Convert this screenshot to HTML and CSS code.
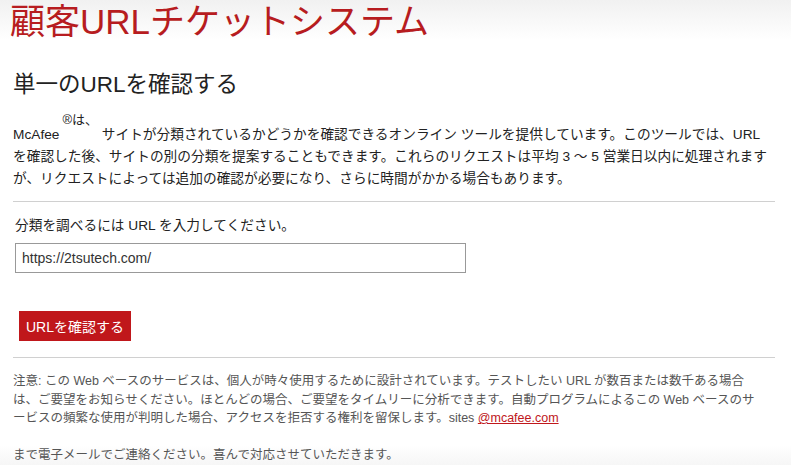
FILE: index.html
```html
<!DOCTYPE html>
<html lang="ja">
<head>
  <meta charset="UTF-8" />
  <meta name="viewport" content="width=device-width, initial-scale=1.0" />
  <title>顧客URLチケットシステム</title>
  <link rel="stylesheet" href="styles.css">
</head>
<body>
  <div class="page">
    <h1 class="site-title">顧客URLチケットシステム</h1>
    <h2 class="section-title">単一のURLを確認する</h2>
    <p class="intro">McAfee<sup class="reg">®は、</sup> サイトが分類されているかどうかを確認できるオンライン ツールを提供しています。このツールでは、URL を確認した後、サイトの別の分類を提案することもできます。これらのリクエストは平均 3 〜 5 営業日以内に処理されますが、リクエストによっては追加の確認が必要になり、さらに時間がかかる場合もあります。</p>
    <hr class="divider" />
    <form class="check-form" onsubmit="return false;">
      <label class="check-label" for="url">分類を調べるには URL を入力してください。</label>
      <input class="check-input" type="text" id="url" name="url" value="https://2tsutech.com/" />
      <button class="check-btn" type="submit">URLを確認する</button>
    </form>
    <hr class="divider" />
    <div class="notes">
      <p>注意: この Web ベースのサービスは、個人が時々使用するために設計されています。テストしたい URL が数百または数千ある場合は、ご要望をお知らせください。ほとんどの場合、ご要望をタイムリーに分析できます。自動プログラムによるこの Web ベースのサービスの頻繁な使用が判明した場合、アクセスを拒否する権利を留保します。sites <a href="#">@mcafee.com</a></p>
      <p class="notes-last">まで電子メールでご連絡ください。喜んで対応させていただきます。</p>
    </div>
  </div>
</body>
</html>
```

FILE: styles.css
```css
/* Base */
* { box-sizing: border-box; }
html, body { margin: 0; padding: 0; }
body {
  font-family: "Liberation Sans", "Noto Sans CJK JP", sans-serif;
  color: #222;
  background: linear-gradient(to bottom, #f1f1f1 0, #fff 40px, #fff 445px, #f6f6f6 465px);
  min-height: 465px;
}
.page { padding: 0 16px 0 13px; }

/* Headings */
.site-title {
  margin: 0 0 0 -3px;
  font-size: 35px; line-height: 44px; font-weight: normal;
  color: #b71c20;
}
.section-title {
  margin: 26px 0 0;
  font-size: 22.5px; line-height: 30px; font-weight: normal;
  color: #222;
}

/* Intro paragraph */
.intro {
  margin: 20px 0 0;
  font-size: 13.7px; line-height: 22px;
}
.reg {
  font-size: 13px; line-height: 0;
  vertical-align: 15px;
  margin-left: 3px;
}

.divider {
  border: 0; border-top: 1px solid #d0d0d0;
  margin: 11px 0 0;
}

/* Form */
.check-form { display: flex; flex-direction: column; align-items: flex-start; padding-left: 2px; }
.check-label { font-size: 13.7px; line-height: 20px; margin-top: 14px; }
.check-input {
  margin-top: 7px; width: 451px; height: 30px;
  border: 1px solid #999; padding: 0 6px;
  font-family: "Liberation Sans", sans-serif; font-size: 14px; color: #333;
  background: #fff;
}
.check-btn {
  margin: 38px 0 5px 4px; height: 30px; padding: 0 7px;
  border: none; background: #c0171b; color: #fff;
  font-family: "Liberation Sans", "Noto Sans CJK JP", sans-serif; font-size: 14px;
  cursor: pointer;
}

/* Notes */
.notes {
  padding-right: 16px; margin-top: 14px;
  font-size: 12.5px; line-height: 18.5px; color: #555;
}
.notes p { margin: 0; }
.notes a { color: #c0171b; }
.notes-last { margin-top: 18.5px !important; }
```
